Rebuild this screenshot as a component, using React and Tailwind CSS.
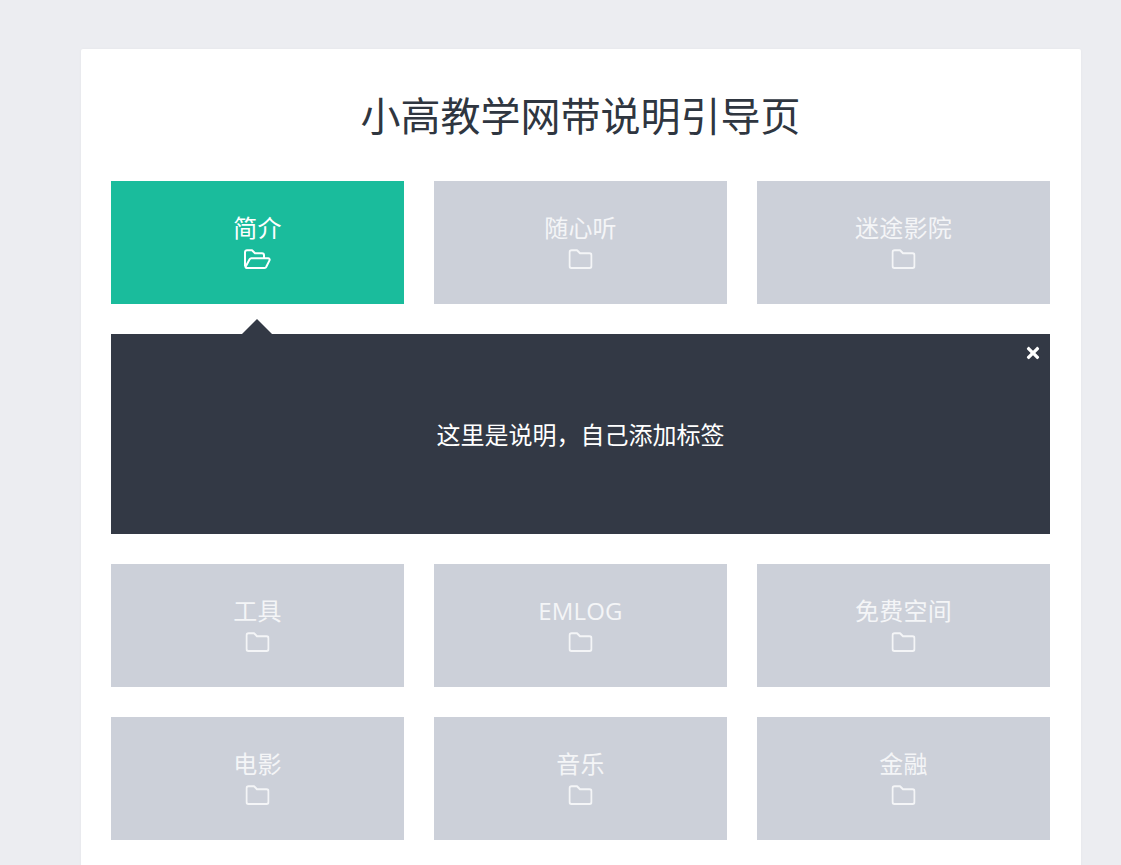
import { FaTimes } from "react-icons/fa";

const FolderIcon = () => (
  <svg width="24" height="20" viewBox="0 0 24 20" fill="none" stroke="currentColor" strokeWidth="2" strokeLinejoin="round" className="mt-[7px] -translate-x-[0.5px]">
    <path d="M3 1.2H8.5L11.5 4.2H21A2 2 0 0 1 23 6.2V17A2 2 0 0 1 21 19H3A2 2 0 0 1 1 17V3.2A2 2 0 0 1 3 1.2Z" />
  </svg>
);

const FolderOpenIcon = () => (
  <svg width="28" height="20" viewBox="0 0 28 20" fill="none" stroke="currentColor" strokeWidth="2" strokeLinejoin="round" className="mt-[7px] -translate-x-[1px]">
    <path d="M2 17.5V3.2A2 2 0 0 1 4 1.2H9L12 4.2H19A2 2 0 0 1 21 6.2V9" />
    <path d="M2.5 18L6.6 10.2A2 2 0 0 1 8.4 9.2H25.2A1.5 1.5 0 0 1 26.5 11.4L23.3 17.8A2 2 0 0 1 21.5 19H3.6A1.2 1.2 0 0 1 2.5 18Z" />
  </svg>
);

const Tile = ({ title, active }) => {
  return (
    <div
      className={`h-[123px] flex flex-col items-center pt-[33px] text-[24px] leading-[28px] ${
        active ? "bg-[#1abc9c] text-white" : "bg-[#ccd0d9] text-[#f4f5f7]"
      }`}
    >
      <span className="tracking-[0.2px]">{title}</span>
      {active ? <FolderOpenIcon /> : <FolderIcon />}
    </div>
  );
};

const App = () => {
  return (
    <div className="h-screen overflow-hidden bg-[#ecedf1] pt-[49px] pl-[81px] font-['Open_Sans','Noto_Sans_CJK_SC',sans-serif]">
      <div className="w-[1000px] bg-white rounded-[2px] pl-[30px] pr-[31px] pb-[30px] shadow-[0_0_3px_rgba(0,0,0,0.04)]">
        <h1 className="h-[132px] pt-[39px] text-center text-[40px] leading-[56px] font-normal text-[#2f3640]">
          小高教学网带说明引导页
        </h1>

        <div className="grid grid-cols-[repeat(3,293px)] gap-[30px]">
          <Tile title="简介" active />
          <Tile title="随心听" />
          <Tile title="迷途影院" />
        </div>

        <div className="relative mt-[30px] h-[200px] pt-[2px] bg-[#333945] flex items-center justify-center text-white text-[24px]">
          <div className="absolute -top-[15px] left-[131px] w-0 h-0 border-x-[15px] border-x-transparent border-b-[15px] border-b-[#333945]" />
          <FaTimes className="absolute top-[10px] right-[8px] w-[18px] h-[18px]" />
          <span>这里是说明，自己添加标签</span>
        </div>

        <div className="grid grid-cols-[repeat(3,293px)] gap-[30px] mt-[30px]">
          <Tile title="工具" />
          <Tile title="EMLOG" />
          <Tile title="免费空间" />
          <Tile title="电影" />
          <Tile title="音乐" />
          <Tile title="金融" />
        </div>
      </div>
    </div>
  );
};

export default App;
